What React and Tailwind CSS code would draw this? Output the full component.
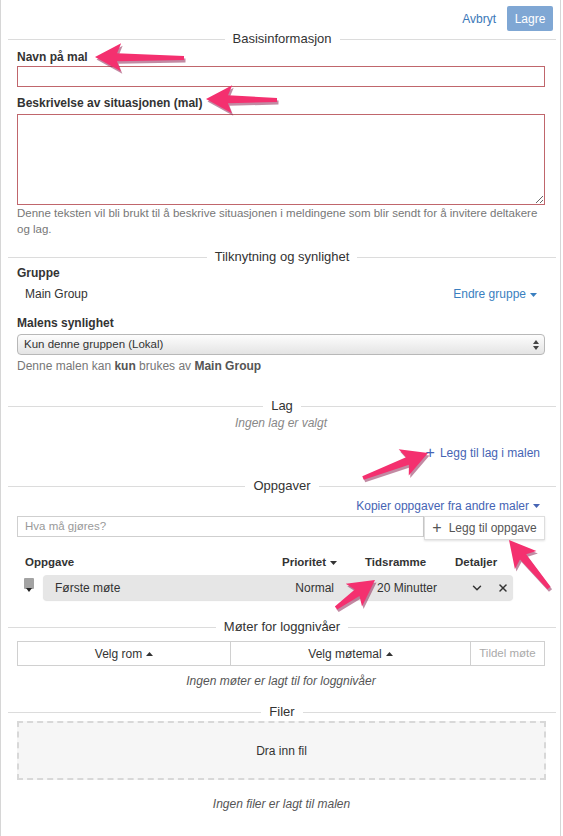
import React from 'react';
import { ChevronDown, X } from 'lucide-react';

const Divider = ({ title }) => (
  <div className="flex items-center h-[16px]">
    <div className="flex-1 h-px bg-[#dcdcdc]" />
    <span className="px-[8px] text-[13px] leading-[16px] text-[#333]">{title}</span>
    <div className="flex-1 h-px bg-[#dcdcdc]" />
  </div>
);

const Caret = ({ up }) => (
  <svg width="7" height="4" viewBox="0 0 7 4" className="inline-block ml-[4px] align-middle">
    {up ? <polygon points="0,4 7,4 3.5,0" fill="#333" /> : <polygon points="0,0 7,0 3.5,4" fill="currentColor" />}
  </svg>
);

// annotation arrow, tip at (x1,y1), tail at (x2,y2)
const Arrow = ({ x1, y1, x2, y2 }) => {
  const dx = x2 - x1;
  const dy = y2 - y1;
  const len = Math.sqrt(dx * dx + dy * dy);
  const ux = dx / len;
  const uy = dy / len;
  const nx = -uy;
  const ny = ux;
  const head = 26;
  const hw = 14;
  const sw = 4;
  const tw = 2;
  const p = (a, b) => `${x1 + ux * a + nx * b},${y1 + uy * a + ny * b}`;
  const pts = [p(0, 0), p(head, hw), p(head - 4, sw), p(len, tw), p(len, -tw), p(head - 4, -sw), p(head, -hw)].join(' ');
  return (
    <g>
      <polygon points={pts} fill="#8f2a58" opacity="0.55" transform="translate(1.5,2.5)" />
      <polygon points={pts} fill="#f4306f" />
    </g>
  );
};

export default function App() {
  return (
    <div className="relative w-[561px] min-h-[836px] border-l border-r border-[#d6d6d6] bg-white pl-[7px] pr-[4px] text-[11.5px] text-[#333]" style={{ fontFamily: '"Liberation Sans", Arial, sans-serif' }}>
      {/* top bar */}
      <div className="flex justify-end items-center pt-[6px] pr-[3px]">
        <span className="text-[12px] text-[#3a78b8] mr-[11px]">Avbryt</span>
        <button className="h-[25px] w-[46px] rounded-[2px] bg-[#7fa7d4] text-white text-[12px]">Lagre</button>
      </div>

      <Divider title="Basisinformasjon" />
      <div className="pl-[9px] pr-[11px]">
        <div className="mt-[2px] font-bold leading-[16px] text-[12px]">Navn på mal</div>
        <input className="mt-[1px] block w-full h-[21px] border border-[#c0666c] bg-white outline-none" />
        <div className="mt-[8px] font-bold leading-[16px] text-[12px]">Beskrivelse av situasjonen (mal)</div>
        <textarea className="mt-[3px] block w-full h-[91px] border border-[#c0666c] bg-white outline-none" />
        <div className="text-[#777] text-[11.5px] leading-[16px]">
          Denne teksten vil bli brukt til å beskrive situasjonen i meldingene som blir sendt for å invitere deltakere og lag.
        </div>
      </div>

      <div className="mt-[12px]">
        <Divider title="Tilknytning og synlighet" />
      </div>
      <div className="pl-[9px] pr-[11px]">
        <div className="font-bold leading-[16px] text-[12px]">Gruppe</div>
        <div className="mt-[5px] flex justify-between leading-[16px] pl-[8px] pr-[8px] text-[12px]">
          <span>Main Group</span>
          <span className="text-[#3a7fc0]">Endre gruppe<Caret /></span>
        </div>
        <div className="mt-[13px] font-bold leading-[16px] text-[12px]">Malens synlighet</div>
        <div className="mt-[3px] h-[21px] flex items-center justify-between rounded-[4px] border border-[#b8b8b8] bg-gradient-to-b from-[#fdfdfd] to-[#e4e4e4] pl-[6px] pr-[5px]">
          <span>Kun denne gruppen (Lokal)</span>
          <svg width="6" height="10" viewBox="0 0 6 10">
            <polygon points="0,4 6,4 3,0" fill="#444" />
            <polygon points="0,6 6,6 3,10" fill="#444" />
          </svg>
        </div>
        <div className="mt-[3px] text-[#777] text-[12px] leading-[16px]">
          Denne malen kan <b className="text-[#555]">kun</b> brukes av <b className="text-[#555]">Main Group</b>
        </div>
      </div>

      <div className="mt-[24px]">
        <Divider title="Lag" />
      </div>
      <div className="pl-[9px] pr-[11px]">
        <div className="mt-[1px] text-center italic text-[#888] leading-[16px] text-[12px]">Ingen lag er valgt</div>
        <div className="mt-[14px] flex justify-end pr-[5px] leading-[16px] text-[#4664b4] text-[12px]">
          <span className="text-[16px] leading-[16px] mr-[5px]">+</span>
          <span>Legg til lag i malen</span>
        </div>
      </div>

      <div className="mt-[17px]">
        <Divider title="Oppgaver" />
      </div>
      <div className="pl-[9px] pr-[11px]">
        <div className="mt-[4px] flex justify-end items-center pr-[5px] leading-[16px] text-[#4664b4] text-[12px] whitespace-nowrap">
          Kopier oppgaver fra andre maler<Caret />
        </div>
        <div className="mt-[2px] flex items-start">
          <div className="flex-1 h-[21px] border border-[#cfcfcf] flex items-center pl-[7px] text-[#999]">Hva må gjøres?</div>
          <div className="w-[121px] h-[24px] border border-[#dedede] shadow-[0_1px_2px_rgba(0,0,0,0.12)] flex items-center justify-center text-[#555] text-[12px]">
            <span className="text-[16px] mr-[7px]">+</span>Legg til oppgave
          </div>
        </div>

        <div className="mt-[14px] flex font-bold leading-[16px] pl-[8px]">
          <span className="w-[257px]">Oppgave</span>
          <span className="w-[83px]">Prioritet<Caret /></span>
          <span className="w-[90px]">Tidsramme</span>
          <span>Detaljer</span>
        </div>
        <div className="mt-[5px] flex items-start">
          <svg width="10" height="15" viewBox="0 0 10 15" className="ml-[7px] mt-[3px]">
            <rect x="0" y="0" width="10" height="11" rx="1" fill="#a3a3a3" />
            <polygon points="2,10 8,10 5,14" fill="#222" />
          </svg>
          <div className="ml-[9px] w-[470px] h-[25px] rounded-[4px] bg-[#e6e6e6] shadow-[0_1px_1px_rgba(0,0,0,0.12)] flex items-center pl-[12px] text-[12px]">
            <span className="w-[230px]">Første møte</span>
            <span className="w-[49px] text-right">Normal</span>
            <span className="ml-[43px] w-[93px]">20 Minutter</span>
            <ChevronDown size={14} strokeWidth={2.5} className="text-[#333]" />
            <X size={12} strokeWidth={3} className="ml-[13px] text-[#333]" />
          </div>
        </div>
      </div>

      <div className="mt-[19px]">
        <Divider title="Møter for loggnivåer" />
      </div>
      <div className="pl-[9px] pr-[11px]">
        <div className="mt-[6px] flex h-[25px] text-[12px]">
          <div className="w-[214px] border border-[#d0d0d0] flex items-center justify-center">Velg rom<Caret up /></div>
          <div className="w-[240px] border border-l-0 border-[#d0d0d0] flex items-center justify-center">Velg møtemal<Caret up /></div>
          <div className="flex-1 border border-l-0 border-[#d0d0d0] flex items-center justify-center text-[#aaa] text-[11.5px]">Tildel møte</div>
        </div>
        <div className="mt-[7px] text-center italic text-[#555] leading-[16px] text-[12px]">Ingen møter er lagt til for loggnivåer</div>
      </div>

      <div className="mt-[15px]">
        <Divider title="Filer" />
      </div>
      <div className="pl-[9px] pr-[10px]">
        <div className="mt-[1px] h-[59px] border-2 border-dashed border-[#d8d8d8] bg-[#f6f6f6] flex items-center justify-center text-[12px]">Dra inn fil</div>
        <div className="mt-[16px] text-center italic text-[#555] leading-[16px] text-[12px]">Ingen filer er lagt til malen</div>
      </div>

      {/* annotation arrows */}
      <svg className="absolute left-0 top-0 pointer-events-none" width="563" height="836">
        <Arrow x1={94} y1={57} x2={183} y2={58} />
        <Arrow x1={205} y1={99} x2={276} y2={100} />
        <Arrow x1={427} y1={453} x2={362} y2={478} />
        <Arrow x1={508} y1={540} x2={548} y2={588} />
        <Arrow x1={374} y1={580} x2={335} y2={608} />
      </svg>
    </div>
  );
}
